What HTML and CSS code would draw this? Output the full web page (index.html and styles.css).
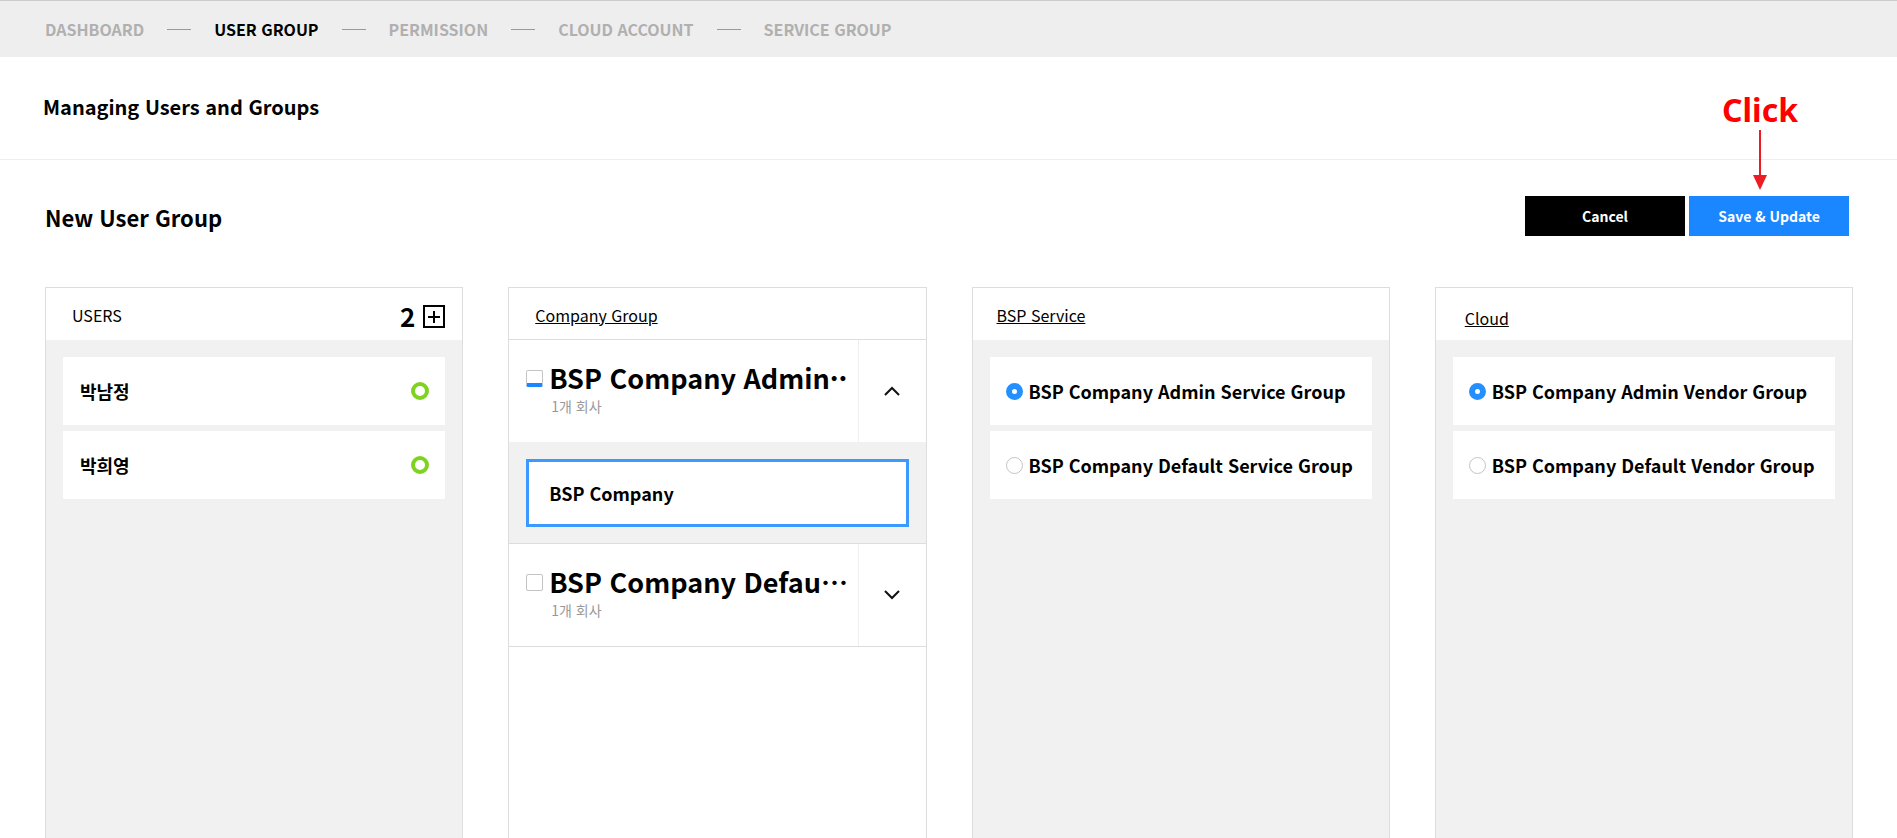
FILE: index.html
```html
<!DOCTYPE html>
<html lang="ko">
<head>
<meta charset="utf-8">
<meta name="viewport" content="width=device-width, initial-scale=1">
<title>Managing Users and Groups</title>
<link rel="stylesheet" href="styles.css">
</head>
<body>
<nav class="steps" aria-label="Sections">
  <a class="step" href="#dashboard">DASHBOARD</a>
  <span class="step-line"></span>
  <a class="step step-current" href="#user-group" aria-current="page">USER GROUP</a>
  <span class="step-line"></span>
  <a class="step" href="#permission">PERMISSION</a>
  <span class="step-line"></span>
  <a class="step" href="#cloud-account">CLOUD ACCOUNT</a>
  <span class="step-line"></span>
  <a class="step" href="#service-group">SERVICE GROUP</a>
</nav>
<header class="page-head">
  <h1 class="page-title">Managing Users and Groups</h1>
</header>
<main class="content">
  <div class="toolbar">
    <h2 class="toolbar-title">New User Group</h2>
    <div class="actions">
      <button class="btn btn-cancel" type="button">Cancel</button>
      <button class="btn btn-save" type="button">Save &amp; Update</button>
      <div class="callout">
        <span class="callout-text">Click</span>
        <svg class="callout-arrow" width="14" height="60" viewBox="0 0 14 60" aria-hidden="true"><path d="M6 0h2v45h6L7 60 0 45h6z" fill="#ed1c24"/></svg>
      </div>
    </div>
  </div>
  <div class="columns">
    <section class="panel">
      <div class="panel-head">
        <h3 class="panel-title">USERS</h3>
        <div class="panel-tools">
          <span class="count">2</span>
          <button class="add" type="button" aria-label="Add user">
            <svg width="22" height="23" viewBox="0 0 22 23" fill="none" stroke="#000" stroke-width="2" aria-hidden="true"><rect x="1" y="1" width="20" height="21"/><path d="M11 6v12M5 12h12"/></svg>
          </button>
        </div>
      </div>
      <ul class="cards">
        <li class="card"><span class="card-name">박남정</span><span class="ring"></span></li>
        <li class="card"><span class="card-name">박희영</span><span class="ring"></span></li>
      </ul>
    </section>
    <section class="panel panel-plain">
      <div class="panel-head panel-head-line">
        <a class="panel-title panel-link" href="#company">Company Group</a>
      </div>
      <div class="group">
        <label class="group-main">
          <input class="check check-active" type="checkbox">
          <span class="group-text">
            <span class="group-name">BSP Company Admin··</span>
            <span class="group-sub">1개 회사</span>
          </span>
        </label>
        <button class="toggle" type="button" aria-label="Collapse">
          <svg width="16" height="10" viewBox="0 0 16 10" fill="none" stroke="#111" stroke-width="2" aria-hidden="true"><path d="M1 9l7-7 7 7"/></svg>
        </button>
      </div>
      <div class="group-body">
        <div class="card card-selected"><span class="card-name">BSP Company</span></div>
      </div>
      <div class="group group-line">
        <label class="group-main">
          <input class="check" type="checkbox">
          <span class="group-text">
            <span class="group-name">BSP Company Defau…</span>
            <span class="group-sub">1개 회사</span>
          </span>
        </label>
        <button class="toggle" type="button" aria-label="Expand">
          <svg width="16" height="10" viewBox="0 0 16 10" fill="none" stroke="#111" stroke-width="2" aria-hidden="true"><path d="M1 1l7 7 7-7"/></svg>
        </button>
      </div>
    </section>
    <section class="panel">
      <div class="panel-head panel-head-narrow">
        <a class="panel-title panel-link" href="#service">BSP Service</a>
      </div>
      <div class="cards">
        <label class="card card-option"><input class="radio" type="radio" name="service" checked><span class="card-name">BSP Company Admin Service Group</span></label>
        <label class="card card-option"><input class="radio" type="radio" name="service"><span class="card-name">BSP Company Default Service Group</span></label>
      </div>
    </section>
    <section class="panel">
      <div class="panel-head panel-head-wide">
        <a class="panel-title panel-link" href="#cloud">Cloud</a>
      </div>
      <div class="cards">
        <label class="card card-option"><input class="radio" type="radio" name="vendor" checked><span class="card-name">BSP Company Admin Vendor Group</span></label>
        <label class="card card-option"><input class="radio" type="radio" name="vendor"><span class="card-name">BSP Company Default Vendor Group</span></label>
      </div>
    </section>
  </div>
</main>
</body>
</html>
```
FILE: styles.css
```css
* {
  box-sizing: border-box;
}

body {
  margin: 0;
  min-height: 100vh;
  display: flex;
  flex-direction: column;
  background: #fff;
  color: #000;
  font-family: "Noto Sans CJK KR", sans-serif;
  font-size: 18px;
  line-height: 24px;
}

h1, h2, h3, ul {
  margin: 0;
  padding: 0;
}

button {
  font-family: inherit;
  padding: 0;
  border: 0;
  background: none;
  cursor: pointer;
}

.steps {
  display: flex;
  align-items: center;
  gap: 23px;
  padding: 16px 45px;
  border-top: 1px solid #ccc;
  background: #eee;
}

.step {
  font-size: 16px;
  font-weight: 700;
  color: #b0b0b0;
  text-decoration: none;
  white-space: nowrap;
}

.step-current {
  color: #000;
}

.step-line {
  width: 24px;
  height: 1px;
  background: #999;
}

.page-head {
  padding: 33px 43px 35px;
  border-bottom: 1px solid #eee;
}

.page-title {
  font-size: 20px;
  font-weight: 700;
  line-height: 34px;
}

.content {
  flex: 1;
  display: flex;
  flex-direction: column;
  padding: 36px 44px 0 45px;
}

.toolbar {
  display: flex;
  align-items: center;
  justify-content: space-between;
  padding-right: 4px;
  margin-bottom: 51px;
}

.toolbar-title {
  padding-top: 2px;
  font-size: 22px;
  font-weight: 700;
  line-height: 38px;
}

.actions {
  position: relative;
  display: flex;
  gap: 4px;
}

.btn {
  width: 160px;
  height: 40px;
  font-size: 14px;
  font-weight: 700;
  color: #fff;
}

.btn-cancel {
  background: #000;
}

.btn-save {
  background: #1a86ff;
}

.callout {
  position: absolute;
  right: 49px;
  bottom: 46px;
  width: 80px;
  display: flex;
  flex-direction: column;
  align-items: center;
  pointer-events: none;
}

.callout-text {
  font-family: "Noto Sans", sans-serif;
  font-size: 32px;
  font-weight: 700;
  line-height: 40px;
  color: #f00;
}

.callout-arrow {
  display: block;
}

.columns {
  flex: 1;
  display: grid;
  grid-template-columns: repeat(4, minmax(0, 1fr));
  gap: 45px;
}

.panel {
  border: 1px solid #ddd;
  border-bottom: 0;
  background: #f1f1f1;
}

.panel-plain {
  background: #fff;
}

.panel-head {
  display: flex;
  align-items: center;
  justify-content: space-between;
  height: 52px;
  padding: 2px 17px 0 26px;
  background: #fff;
}

.panel-head-line {
  border-bottom: 1px solid #ddd;
}

.panel-head-narrow {
  padding-left: 24px;
}

.panel-head-wide {
  padding-left: 29px;
  padding-top: 7px;
}

.panel-title {
  font-size: 16px;
  font-weight: 400;
  color: #000;
}

.panel-link {
  text-decoration: underline;
}

.panel-tools {
  display: flex;
  align-items: center;
  gap: 8px;
  padding-top: 2px;
}

.count {
  font-size: 26px;
  font-weight: 700;
}

.add svg,
.toggle svg {
  display: block;
}

.cards {
  display: flex;
  flex-direction: column;
  gap: 6px;
  padding: 17px;
  list-style: none;
}

.card {
  display: flex;
  align-items: center;
  justify-content: space-between;
  min-height: 68px;
  padding: 0 16px 0 17px;
  background: #fff;
}

.card-option {
  justify-content: flex-start;
  gap: 6px;
  padding-left: 16px;
}

.card-selected {
  padding: 0 20px;
  border: 3px solid #3c99ff;
}

.card-name {
  font-weight: 700;
}

.ring {
  width: 18px;
  height: 18px;
  border: 4px solid #7ed321;
  border-radius: 50%;
}

.group {
  display: flex;
  height: 102px;
}

.group-line {
  height: 103px;
  border-bottom: 1px solid #ddd;
}

.group-main {
  flex: 1;
  min-width: 0;
  display: flex;
  align-items: flex-start;
  gap: 6px;
  padding: 19px 0 0 17px;
}

.group-text {
  flex: 1;
  min-width: 0;
  display: flex;
  flex-direction: column;
}

.group-name {
  font-size: 27px;
  font-weight: 700;
  line-height: 38px;
  white-space: nowrap;
}

.group-sub {
  padding-left: 2px;
  font-size: 14px;
  line-height: 18px;
  color: #999;
}

.group-body {
  padding: 17px 17px 16px;
  background: #f1f1f1;
  border-bottom: 1px solid #ddd;
}

.toggle {
  width: 68px;
  display: flex;
  align-items: center;
  justify-content: center;
  border-left: 1px solid #eee;
}

.check {
  appearance: none;
  flex: none;
  width: 17px;
  height: 17px;
  margin: 11px 0 0;
  border: 1px solid #c4c4c4;
  border-radius: 2px;
  background: #fff;
}

.check-active {
  border-bottom: 4px solid #1a86ff;
}

.radio {
  appearance: none;
  flex: none;
  width: 17px;
  height: 17px;
  margin: 0;
  border: 1px solid #c4c4c4;
  border-radius: 50%;
  background: #fff;
}

.radio:checked {
  border: 6px solid #2490ff;
}
```
